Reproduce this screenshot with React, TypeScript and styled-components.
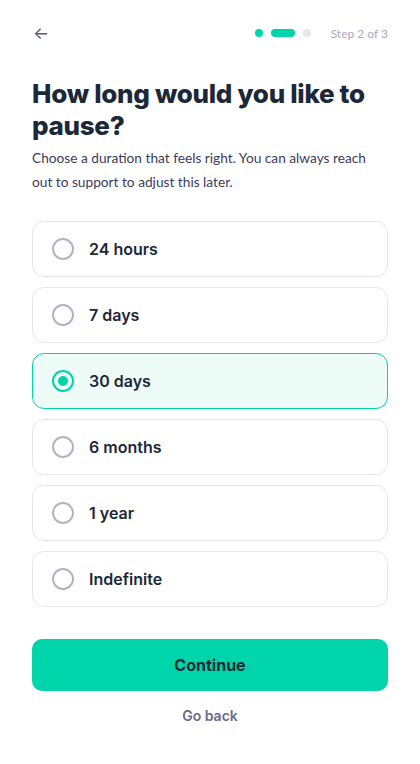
import { useState } from "react";
import styled, { createGlobalStyle } from "styled-components";

const GlobalStyle = createGlobalStyle`
  * { box-sizing: border-box; }
  body {
    margin: 0;
    background: #ffffff;
    font-family: "Inter", "Liberation Sans", sans-serif;
  }
`;

const options = ["24 hours", "7 days", "30 days", "6 months", "1 year", "Indefinite"];

function App() {
  const [selected, setSelected] = useState("30 days");

  return (
    <Page>
      <GlobalStyle />
      <Header>
        <BackArrow>←</BackArrow>
        <Progress>
          <Dot active />
          <Dot active wide />
          <Dot />
          <StepLabel>Step 2 of 3</StepLabel>
        </Progress>
      </Header>

      <Title>How long would you like to pause?</Title>
      <Subtitle>
        Choose a duration that feels right. You can always reach out to support to adjust this later.
      </Subtitle>

      <OptionList>
        {options.map((opt) => (
          <Option key={opt} selected={opt === selected} onClick={() => setSelected(opt)}>
            <Radio selected={opt === selected} />
            <OptionLabel>{opt}</OptionLabel>
          </Option>
        ))}
      </OptionList>

      <ContinueButton>Continue</ContinueButton>
      <GoBack>Go back</GoBack>
    </Page>
  );
}

export default App;

/* Styled Components */

const Page = styled.div`
  padding: 20px 32px 32px;
  display: flex;
  flex-direction: column;
`;

const Header = styled.div`
  display: flex;
  justify-content: space-between;
  align-items: center;
  height: 26px;
`;

const BackArrow = styled.span`
  font-size: 17px;
  color: #5c5b78;
  line-height: 1;
  margin-left: 1px;
`;

const Progress = styled.div`
  display: flex;
  align-items: center;
  gap: 8px;
`;

const Dot = styled.span<{ active?: boolean; wide?: boolean }>`
  width: ${(p) => (p.wide ? "24px" : "8px")};
  height: 8px;
  border-radius: 4px;
  background: ${(p) => (p.active ? "#00d4aa" : "#e6e5ef")};
`;

const StepLabel = styled.span`
  margin-left: 12px;
  font-family: "Lato", "Open Sans", sans-serif;
  font-size: 12px;
  color: #a9a8c0;
`;

const Title = styled.h1`
  margin: 32px 0 0;
  font-size: 26px;
  line-height: 32px;
  font-weight: 800;
  letter-spacing: -0.3px;
  color: #1c2838;
`;

const Subtitle = styled.p`
  margin: 4px 0 0;
  font-family: "Lato", "Open Sans", sans-serif;
  font-size: 13.7px;
  line-height: 24px;
  color: #3d3c58;
`;

const OptionList = styled.div`
  margin-top: 27px;
  display: flex;
  flex-direction: column;
  gap: 10px;
`;

const Option = styled.div<{ selected?: boolean }>`
  height: 56px;
  display: flex;
  align-items: center;
  gap: 15px;
  padding: 0 19px;
  border-radius: 12px;
  border: 1px solid ${(p) => (p.selected ? "#00d4aa" : "#e6e5ee")};
  background: ${(p) => (p.selected ? "#eefcf8" : "#ffffff")};
  cursor: pointer;
`;

const Radio = styled.span<{ selected?: boolean }>`
  width: 22px;
  height: 22px;
  border-radius: 50%;
  border: 2px solid ${(p) => (p.selected ? "#00d4aa" : "#b3b1c9")};
  display: flex;
  align-items: center;
  justify-content: center;
  flex-shrink: 0;

  &::after {
    content: "";
    width: 10px;
    height: 10px;
    border-radius: 50%;
    background: #00d4aa;
    display: ${(p) => (p.selected ? "block" : "none")};
  }
`;

const OptionLabel = styled.span`
  font-size: 16px;
  font-weight: 600;
  color: #1c2838;
`;

const ContinueButton = styled.button`
  margin-top: 32px;
  height: 52px;
  border: none;
  border-radius: 10px;
  background: #00d4aa;
  font-family: "Inter", "Liberation Sans", sans-serif;
  font-size: 16px;
  font-weight: 700;
  color: #1c2838;
  cursor: pointer;
`;

const GoBack = styled.button`
  margin-top: 15px;
  align-self: center;
  background: none;
  border: none;
  font-family: "Inter", "Liberation Sans", sans-serif;
  font-size: 14px;
  font-weight: 600;
  color: #6b6a8a;
  cursor: pointer;
`;
